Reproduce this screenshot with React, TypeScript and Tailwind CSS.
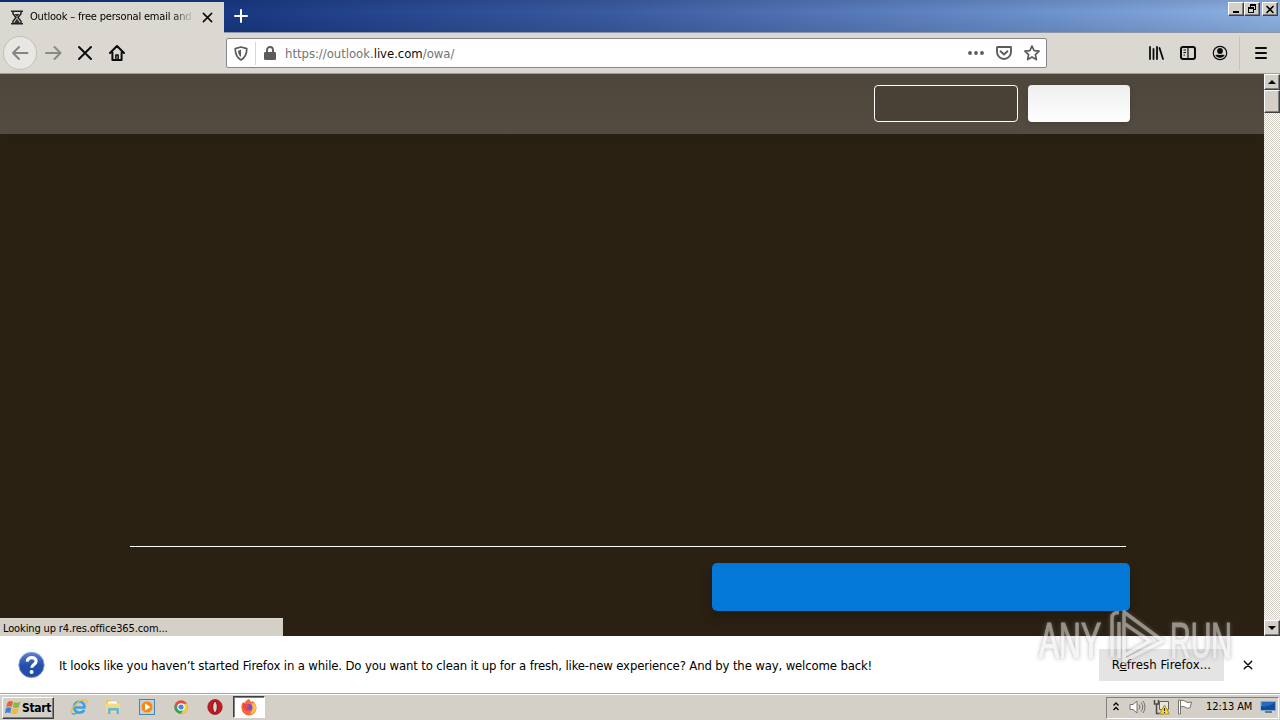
import type { ReactNode } from "react";

const RAISED =
    "bg-[#d4d0c8] border border-t-white border-l-white border-r-[#404040] border-b-[#404040] shadow-[inset_-1px_-1px_0_#808080]";

const CloseIcon = ({ size }: { size: number }) => (
    <svg width={size} height={size} viewBox="0 0 12 12" fill="none" stroke="#0c0c0d" strokeWidth="1.7" strokeLinecap="round">
        <path d="M1.5 1.5l9 9M10.5 1.5l-9 9" />
    </svg>
);

const TitleBar = () => (
    <div className="flex h-[33px] items-start border-b border-[#8d97ac] bg-[linear-gradient(to_bottom,#00000018,transparent_35%,#00000018),linear-gradient(90deg,#10307e_0%,#1b3a84_20%,#3a5ba1_48%,#6a8fcb_80%,#8fb3e4_100%)]">
        <div className="-mb-px mt-[2px] flex h-[31px] w-[224px] items-center bg-[#dbd8d1] pl-[10px]">
            <svg width="14" height="15" viewBox="0 0 14 15" fill="none" stroke="#222" strokeWidth="1.5">
                <path d="M1 1.2h12M1 13.8h12M3 1.5v2.2L6 7.5l-3 3.8v2.2M11 1.5v2.2L8 7.5l3 3.8v2.2" />
                <path d="M4.5 4h5L7 7zM7 8.5l3 4.5H4z" fill="#333" stroke="none" />
            </svg>
            <span className="ml-[6px] w-[164px] overflow-hidden whitespace-nowrap text-[11px] tracking-[-0.18px] [mask-image:linear-gradient(90deg,#000_142px,transparent_164px)]">
                Outlook – free personal email and calendar
            </span>
            <span className="ml-[8px] pb-px">
                <CloseIcon size={11} />
            </span>
        </div>
        <svg className="ml-[10px] mt-[9px]" width="14" height="14" viewBox="0 0 14 14" stroke="#fff" strokeWidth="2" strokeLinecap="round">
            <path d="M7 1v12M1 7h12" />
        </svg>
        <div className="ml-auto mr-[2px] mt-[2px] flex">
            <div className={`${RAISED} flex h-[14px] w-[16px] items-center justify-center`}>
                <svg width="12" height="10" viewBox="0 0 12 10">
                    <path d="M3 7h6v2H3z" />
                </svg>
            </div>
            <div className={`${RAISED} flex h-[14px] w-[16px] items-center justify-center`}>
                <svg width="12" height="10" viewBox="0 0 12 10" fill="none" stroke="#000" shapeRendering="crispEdges">
                    <path d="M4.5 3V.5h5v5H7M4 1.5h6M2.5 3.5h5v5h-5zM2 4.5h6" />
                </svg>
            </div>
            <div className={`${RAISED} ml-[2px] flex h-[14px] w-[16px] items-center justify-center`}>
                <svg width="10" height="9" viewBox="0 0 10 9" stroke="#000" strokeWidth="1.6">
                    <path d="M1.5 1l7 7M8.5 1l-7 7" />
                </svg>
            </div>
        </div>
    </div>
);

const UrlBar = () => (
    <div className="flex h-[30px] w-[821px] items-center rounded-[2px] border border-[#85878b] bg-white">
        <svg className="ml-[7px]" width="14" height="15" viewBox="0 0 14 15" fill="none" stroke="#5b5b5c" strokeWidth="1.7">
            <path d="M7 1L12.8 2.6c0 5.2-1.3 9-5.8 11.3C2.5 11.6 1.2 7.8 1.2 2.6z" strokeLinejoin="round" />
            <path d="M7 3.8v7.2C4.8 9.3 4.1 7.3 4 4.7z" fill="#5b5b5c" stroke="none" />
        </svg>
        <div className="ml-[7px] h-[23px] w-px bg-[#d7d7db]" />
        <svg className="ml-[8px]" width="12" height="14" viewBox="0 0 12 14" fill="none">
            <path d="M3 7V4a3 3 0 016 0v3" stroke="#5b5b5c" strokeWidth="1.9" />
            <rect y="6" width="12" height="8" rx="1.2" fill="#5b5b5c" />
        </svg>
        <span className="ml-[9px] whitespace-nowrap pt-[2px] text-[13px] tracking-[-0.03px] text-[#737373]">
            https://outlook.<span className="text-[#0c0c0d]">live.com</span>/owa/
        </span>
        <div className="ml-auto mr-[6px] flex items-center">
            <svg width="16" height="16" viewBox="0 0 16 16" fill="#5b5b5c">
                <circle cx="2" cy="8" r="1.9" />
                <circle cx="8" cy="8" r="1.9" />
                <circle cx="14" cy="8" r="1.9" />
            </svg>
            <svg className="ml-[12px]" width="16" height="16" viewBox="0 0 16 16" fill="none" stroke="#5b5b5c" strokeWidth="1.9" strokeLinecap="round" strokeLinejoin="round">
                <path d="M1.5 2h13a.5.5 0 01.5.5V7a7 7 0 01-14 0V2.500a.5.5 0 01.5-.5z" />
                <path d="M4.5 6.3L8 9.5l3.5-3.2" />
            </svg>
            <svg className="ml-[12px]" width="16" height="16" viewBox="0 0 16 16" fill="none" stroke="#5b5b5c" strokeWidth="1.7" strokeLinejoin="round">
                <path d="M8 1l2.1 4.6 5 .6-3.7 3.4 1 5L8 12.1l-4.4 2.5 1-5L.9 6.200l5-.6z" />
            </svg>
        </div>
    </div>
);

const Toolbar = () => (
    <div className="flex h-[41px] items-center border-b border-[#a5a199] bg-[#dbd8d1]">
        <div className="ml-[3px] flex h-[34px] w-[34px] items-center justify-center rounded-full border border-[#c3c0ba] bg-[#e9e7e3]">
            <svg width="18" height="16" viewBox="0 0 18 16" fill="none" stroke="#86847f" strokeWidth="2" strokeLinecap="round" strokeLinejoin="round">
                <path d="M16.500 8H2M8 2L2 8l6 6" />
            </svg>
        </div>
        <svg className="ml-[8px]" width="17" height="16" viewBox="0 0 17 16" fill="none" stroke="#8b8984" strokeWidth="2" strokeLinecap="round" strokeLinejoin="round">
            <path d="M1 8h14M9.5 2l6 6-6 6" />
        </svg>
        <svg className="ml-[15px]" width="16" height="16" viewBox="0 0 16 16" stroke="#0c0c0d" strokeWidth="2" strokeLinecap="round">
            <path d="M2 2l12 12M14 2L2 14" />
        </svg>
        <svg className="ml-[16px]" width="16" height="16" viewBox="0 0 16 16" fill="none" stroke="#0c0c0d" strokeWidth="2" strokeLinecap="round" strokeLinejoin="round">
            <path d="M1 8l7-7 7 7M3.4 7.500V15h9.2V7.500" />
            <path d="M6.900 14.500V10h2.200v4.500" strokeWidth="1.500" />
        </svg>
        <div className="ml-[101px]">
            <UrlBar />
        </div>
        <div className="ml-[101px] flex items-center">
            <svg width="16" height="16" viewBox="0 0 16 16" stroke="#0c0c0d" strokeWidth="1.8" strokeLinecap="round">
                <path d="M2 2v12M5.5 4v10M9 2v12M11.500 3l3.5 11" />
            </svg>
            <svg className="ml-[16px]" width="16" height="16" viewBox="0 0 16 16" fill="none" stroke="#0c0c0d" strokeWidth="2">
                <rect x="1" y="2" width="14" height="12" rx="2" />
                <path d="M8 2v12" strokeWidth="1.2" />
                <path d="M3.5 5H6M3.5 7.5H6M3.5 10H5" strokeWidth="1" />
            </svg>
            <svg className="ml-[16px]" width="16" height="16" viewBox="0 0 16 16" fill="none">
                <circle cx="8" cy="8" r="6.7" stroke="#0c0c0d" strokeWidth="1.2" />
                <circle cx="8" cy="6" r="2.9" fill="#0c0c0d" />
                <path d="M3.3 10.200C5.500 9.600 6 10 8 10s2.500-.4 4.700.2a5.400 5.400 0 01-9.400 0z" fill="#0c0c0d" />
            </svg>
            <div className="ml-[11px] h-[34px] w-px bg-[#c6c3bc]" />
            <svg className="ml-[14px]" width="14" height="14" viewBox="0 0 14 14" stroke="#0c0c0d" strokeWidth="2" strokeLinecap="round">
                <path d="M2 2h10M2 7h10M2 12h10" />
            </svg>
        </div>
    </div>
);

const Scrollbar = () => (
    <div className="flex w-[16px] flex-col bg-[repeating-conic-gradient(#fff_0_25%,#d4d0c8_0_50%)] bg-[size:2px_2px]">
        <div className={`${RAISED} flex h-[16px] items-center justify-center`}>
            <svg width="8" height="4" viewBox="0 0 8 4">
                <path d="M4 0l4 4H0z" />
            </svg>
        </div>
        <div className={`${RAISED} h-[23px]`} />
        <div className={`${RAISED} mt-auto flex h-[16px] items-center justify-center`}>
            <svg width="8" height="4" viewBox="0 0 8 4">
                <path d="M0 0h8L4 4z" />
            </svg>
        </div>
    </div>
);

const Page = () => (
    <div className="relative flex h-[562px]">
        <main className="flex flex-1 flex-col bg-[#2a2113]">
            <header className="flex h-[60px] items-start justify-end gap-[10px] bg-linear-to-b from-[#4d463b] to-[#554c41] pr-[134px] pt-[11px] shadow-[0_4px_10px_#00000010]">
                <button className="h-[37px] w-[144px] rounded-[4px] border border-white bg-[#494036]" />
                <button className="h-[37px] w-[102px] rounded-[4px] bg-linear-to-b from-[#eeeeef] to-white shadow-[0_2px_6px_#00000022]" />
            </header>
            <div className="ml-[130px] mt-[412px] h-px w-[996px] bg-white" />
            <button className="ml-[712px] mt-[16px] h-[48px] w-[418px] rounded-[5px] bg-[#0478d7] shadow-[0_6px_12px_#00000040]" />
        </main>
        <Scrollbar />
        <div className="absolute bottom-0 left-0 flex h-[18px] w-[283px] items-center border-t border-[#dcd9d2] bg-[#d4d0c8] pl-[3px] pt-[3px] text-[11px] tracking-[-0.13px]">
            Looking up r4.res.office365.com...
        </div>
    </div>
);

const Notification = () => (
    <div className="flex h-[57px] items-center bg-white">
        <svg className="ml-[18px]" width="27" height="28" viewBox="0 0 27 28">
            <defs>
                <linearGradient id="help" x2="0" y2="1">
                    <stop stopColor="#5d82cc" />
                    <stop offset=".5" stopColor="#2450ae" />
                    <stop offset="1" stopColor="#234a9f" />
                </linearGradient>
            </defs>
            <circle cx="13.5" cy="14" r="12.7" fill="url(#help)" stroke="#8ea5d2" />
            <path d="M9.2 10.600c.3-5.400 9-5.200 8.900-.4 0 3.200-4.300 3.300-4.400 6.600" fill="none" stroke="#fff" strokeWidth="3.2" />
            <circle cx="13.6" cy="21" r="2" fill="#fff" />
        </svg>
        <span className="ml-[14px] whitespace-nowrap pt-[2px] text-[13px] tracking-[-0.142px]">
            It looks like you haven’t started Firefox in a while. Do you want to clean it up for a fresh, like-new experience? And by the way, welcome back!
        </span>
        <button className="ml-auto h-[32px] w-[125px] whitespace-nowrap bg-[#e4e4e4] text-[13px] tracking-[0.1px]">
            R<span className="underline">e</span>fresh Firefox...
        </button>
        <span className="ml-[19px] mr-[27px]">
            <CloseIcon size={10} />
        </span>
    </div>
);

const TaskIcon = ({ children }: { children: ReactNode }) => (
    <svg width="18" height="18" viewBox="0 0 18 18" fill="none">
        {children}
    </svg>
);

const Taskbar = () => (
    <div className="flex h-[27px] items-center border-t border-[#aaa69f] bg-[#d4d0c8] shadow-[inset_0_1px_0_#fff]">
        <button className={`${RAISED} ml-[2px] mt-px flex h-[22px] w-[52px] items-center pl-[2px] text-[11px] font-bold`}>
            <svg width="16" height="17" viewBox="0 0 15 15">
                <path d="M2.5 2.5Q5 .5 7.5 2L6.3 7Q4 5.600 1 7z" fill="#e6603c" />
                <path d="M8.4 2.3Q11 3.7 14.5 2L13 7Q10 8.6 7.3 7.3z" fill="#87b944" />
                <path d="M.9 8Q3.5 6.600 6 8L4.900 13Q2.5 11.500 0 13z" fill="#3e83cc" />
                <path d="M7 8.300Q10 9.600 12.8 8L11.500 13Q8.500 14.500 5.800 13.200z" fill="#f3b934" />
            </svg>
            <span className="ml-px text-[12px] tracking-[-0.35px]">Start</span>
        </button>
        <div className="ml-[16px] flex items-center gap-[16px]">
            <TaskIcon>
                <path d="M14.2 12A5.5 5.5 0 119.5 3.700c3.200 0 5.200 2.500 5 5.800H5" stroke="#38a4df" strokeWidth="2.5" />
                <path d="M2 15.500C-1 12 10-.5 16.500 2c1.500.8.5 3-.5 4" stroke="#efbd3e" strokeWidth="1.3" />
                <path d="M2 15.500c1.500 1.300 4-.2 5.500-1.200" stroke="#38a4df" strokeWidth="1.5" />
            </TaskIcon>
            <TaskIcon>
                <path d="M2 2h5l1 1.500h7V13H2z" fill="#e8c65d" />
                <path d="M4 3.500h9V9H4z" fill="#fff" />
                <path d="M1.5 5.500h15l-.5 9H2z" fill="#f0d987" />
                <path d="M4 16v-5q0-1 1-1h9q1 0 1 1v5h-2.500v-3.500h-6V16z" fill="#68b5dc" />
            </TaskIcon>
            <TaskIcon>
                <rect x="1.5" y="1.5" width="15" height="15" fill="#b7d5ee" stroke="#4284b8" />
                <circle cx="9" cy="9" r="6" fill="#f08a1d" stroke="#fac477" />
                <path d="M7 5.500v7L12.500 9z" fill="#fff" />
            </TaskIcon>
            <TaskIcon>
                <circle cx="9" cy="9" r="6.7" fill="#e34c3c" />
                <path d="M3.2 5.700A6.700 6.700 0 009 15.700L12 10.500 9 9 6 10.500z" fill="#35a853" />
                <path d="M9 15.700A6.700 6.700 0 0014.800 5.700H9L12 10.500z" fill="#f7cd40" />
                <circle cx="9" cy="9" r="3.2" fill="#4285e4" stroke="#fff" strokeWidth="1.2" />
            </TaskIcon>
            <TaskIcon>
                <ellipse cx="9" cy="9" rx="7.2" ry="7.5" fill="#c51a20" stroke="#85161a" strokeWidth=".7" />
                <ellipse cx="9" cy="9" rx="2.300" ry="5.600" fill="#ddd5cf" stroke="#761013" />
            </TaskIcon>
        </div>
        <div className="ml-[9px] flex h-[22px] w-[32px] items-center justify-center border border-b-white border-l-[#404040] border-r-white border-t-[#404040] bg-white shadow-[inset_1px_1px_0_#808080]">
            <TaskIcon>
                <path d="M2 6l1-2 1.500 1Q7 1 9.500 1q0 2 2 3l1-1q4 3 4 7A7.500 7.500 0 011.500 10Q1 8 2 6z" fill="#f76b35" />
                <path d="M10 1q0 3 3 5l1-2q3 4 2 8-2 4-6 4.500 4-6 0-15.500z" fill="#ffc23c" />
                <circle cx="9" cy="9.500" r="3.500" fill="#7d4ad1" />
                <path d="M3 6q3-1 5 1l2 .5Q8 9 6.500 9q1 3 5 2-2 3-6 1.500Q2.500 11 3 6z" fill="#f4453d" />
            </TaskIcon>
        </div>
        <div className="ml-auto mr-[1px] mt-px flex h-[22px] w-[173px] items-center border border-b-white border-l-[#808080] border-r-white border-t-[#808080] text-[11px]">
            <svg className="mb-[2px] ml-[6px]" width="6" height="9" viewBox="0 0 6 9" fill="none" stroke="#000" strokeWidth="1.3">
                <path d="M.5 3.500L3 1l2.500 2.500M.5 8L3 5.500 5.500 8" />
            </svg>
            <svg className="mb-px ml-[10px]" width="17" height="16" viewBox="0 0 17 16" fill="none" stroke="#77736d">
                <path d="M1 5.500h3L8 2v12l-4-3.500H1z" fill="#fff" />
                <path d="M10 5.500q2 2.500 0 5M12 3.500q3.500 4.500 0 9M14 2q4 6 0 12" />
            </svg>
            <svg className="mb-px ml-[7px]" width="17" height="16" viewBox="0 0 17 16" fill="none" stroke="#65625e">
                <path d="M6.5 2.500h9v8h-9z" fill="#e7e5e0" />
                <path d="M1.5 1v4h4V1M3.500 5v9.500H11" stroke="#4d4a46" strokeWidth="1.5" />
                <path d="M11.5 6l5 9h-10z" fill="#fbd62a" stroke="#b4961d" />
                <path d="M11.5 9v3M11.500 13v1" stroke="#222" />
            </svg>
            <svg className="mb-px ml-[7px]" width="17" height="16" viewBox="0 0 17 16" fill="#fff" stroke="#77736d">
                <path d="M3.5 1.500q3-1 5 1t6 .5l-1.500 6q-3 .8-5-.8t-4.500-.2zM1.500 1h2v14h-2z" />
            </svg>
            <span className="ml-[12px] w-[48px] whitespace-nowrap tracking-[-0.08px]">12:13 AM</span>
            <svg className="mb-px ml-[6px]" width="16" height="14" viewBox="0 0 16 14">
                <path d="M1 1.500h14.500v9H1z" fill="#236cc1" stroke="#73aee0" />
                <path d="M1 6q7 2 14-4v8H1z" fill="#164b94" />
                <path d="M5 11h7v2H5z" fill="#777" />
            </svg>
        </div>
    </div>
);

const Watermark = () => (
    <svg
        className="pointer-events-none absolute left-[1030px] top-[590px] opacity-55 drop-shadow-[0_0_2px_#777]"
        width="220"
        height="90"
        viewBox="0 0 220 90"
        fill="#f1eeeb"
        stroke="#f1eeeb"
        fontFamily="'Liberation Sans'"
        fontSize="50"
    >
        <text x="9" y="68" strokeWidth="1.200" textLength="62" lengthAdjust="spacingAndGlyphs">ANY</text>
        <g fill="none" strokeWidth="3.500" strokeLinejoin="round">
            <path d="M82 67V28q0-6 7-5M89 68V32M94 75V22l39 29-39 20M95 34l25 17-25 14" />
        </g>
        <text x="140" y="68" strokeWidth="1.200" textLength="62" lengthAdjust="spacingAndGlyphs">RUN</text>
    </svg>
);

export default function App() {
    return (
        <div className="relative h-[720px] w-[1280px] overflow-hidden font-['DejaVu_Sans_Condensed','Noto_Sans',sans-serif] text-black">
            <TitleBar />
            <Toolbar />
            <Page />
            <Notification />
            <Taskbar />
            <Watermark />
        </div>
    );
}
